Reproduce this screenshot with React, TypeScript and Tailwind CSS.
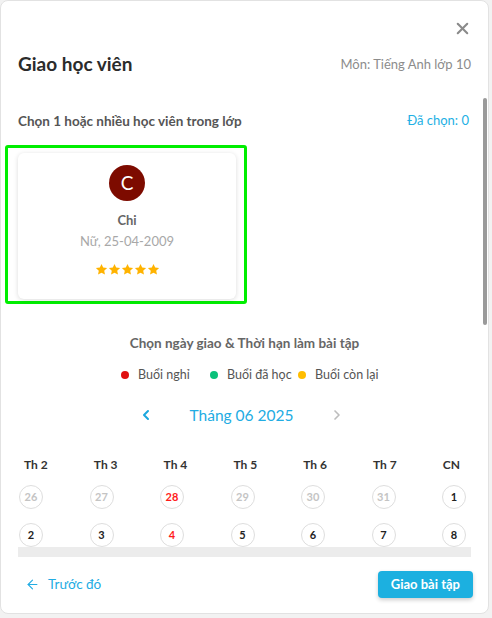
import React from 'react';
import { X, ChevronLeft, ChevronRight, ArrowLeft } from 'lucide-react';

const weekdays = ['Th 2', 'Th 3', 'Th 4', 'Th 5', 'Th 6', 'Th 7', 'CN'];

type Day = { d: number; tone: 'muted' | 'red' | 'dark' };

const rows: Day[][] = [
  [
    { d: 26, tone: 'muted' },
    { d: 27, tone: 'muted' },
    { d: 28, tone: 'red' },
    { d: 29, tone: 'muted' },
    { d: 30, tone: 'muted' },
    { d: 31, tone: 'muted' },
    { d: 1, tone: 'dark' },
  ],
  [
    { d: 2, tone: 'dark' },
    { d: 3, tone: 'dark' },
    { d: 4, tone: 'red' },
    { d: 5, tone: 'dark' },
    { d: 6, tone: 'dark' },
    { d: 7, tone: 'dark' },
    { d: 8, tone: 'dark' },
  ],
];

const toneClass = {
  muted: 'text-[#c4c4c4]',
  red: 'text-[#ff1a1a]',
  dark: 'text-[#222]',
};

const Star = () => (
  <svg viewBox="0 0 24 24" className="h-[13px] w-[13px]" fill="#ffb300">
    <path d="M12 1.8l3.1 6.6 7.2.9-5.3 5 1.4 7.1L12 17.9l-6.4 3.5 1.4-7.1-5.3-5 7.2-.9z" />
  </svg>
);

const legend = [
  { label: 'Buổi nghỉ', dot: 'bg-[#e01010]', w: 'w-[89px]' },
  { label: 'Buổi đã học', dot: 'bg-[#0ac17a]', w: 'w-[88px]' },
  { label: 'Buổi còn lại', dot: 'bg-[#ffbd00]', w: 'w-[76px]' },
];

export default function App() {
  return (
    <div className="w-[492px] h-[618px] bg-[#f2f2f2]" style={{ fontFamily: 'Lato, "Noto Sans", sans-serif' }}>
      <div className="relative w-[489px] h-[614px] bg-white rounded-lg border border-[#e2e2e2] overflow-hidden">
        {/* scrollbar thumb */}
        <div className="absolute right-[1px] top-[97px] w-[4px] h-[227px] rounded-full bg-[#9a9a9a]" />

        <div className="flex justify-end pt-[18px] pr-[16px]">
          <X className="h-[19px] w-[19px] text-[#8a8a8a]" strokeWidth={2.6} />
        </div>

        <div className="flex items-center justify-between px-[17px] mt-[12px]">
          <h2 className="text-[19px] font-bold text-[#2b2b2b]">Giao học viên</h2>
          <span className="text-[13px] text-[#8c8c8c]">Môn: Tiếng Anh lớp 10</span>
        </div>

        <div className="flex items-center justify-between pl-[17px] pr-[19px] mt-[32px]">
          <span className="text-[13.5px] font-bold text-[#555]">Chọn 1 hoặc nhiều học viên trong lớp</span>
          <span className="text-[13px] text-[#22b0e4]">Đã chọn: 0</span>
        </div>

        <div className="ml-[4px] mt-[14px] w-[242px] h-[159px] border-[3px] border-[#00ee00] rounded-[3px] pl-[10px] pt-[5px]">
          <div className="w-[218px] h-[146px] bg-white rounded-md shadow-[0_1px_5px_rgba(0,0,0,0.14)] flex flex-col items-center">
            <div className="mt-[12px] h-[36px] w-[36px] rounded-full bg-[#7d0b00] flex items-center justify-center text-white text-[19px]">
              C
            </div>
            <div className="mt-[10px] text-[13px] font-bold text-[#666]">Chi</div>
            <div className="mt-[2px] text-[13px] text-[#a8a8a8]">Nữ, 25-04-2009</div>
            <div className="mt-[11px] flex">
              <Star />
              <Star />
              <Star />
              <Star />
              <Star />
            </div>
          </div>
        </div>

        <div className="mt-[29px] text-center text-[13.5px] font-bold text-[#666]">
          Chọn ngày giao &amp; Thời hạn làm bài tập
        </div>

        <div className="mt-[13px] flex justify-center items-center text-[12.5px] text-[#555] pl-[6px] whitespace-nowrap">
          {legend.map((l) => (
            <div key={l.label} className={`flex items-center shrink-0 ${l.w}`}>
              <span className={`h-[8px] w-[8px] shrink-0 rounded-full mr-[9px] ${l.dot}`} />
              {l.label}
            </div>
          ))}
        </div>

        <div className="mt-[19px] flex items-center justify-center pr-[6px]">
          <ChevronLeft className="h-[16px] w-[16px] text-[#1aa7de]" strokeWidth={3} />
          <span className="mx-[36px] text-[15.5px] text-[#22ace3]">Tháng 06 2025</span>
          <ChevronRight className="h-[16px] w-[16px] text-[#bdbdbd]" strokeWidth={2.5} />
        </div>

        <div className="mt-[29px] flex justify-between pl-[23px] pr-[28px] text-[12px] font-bold text-[#333]">
          {weekdays.map((w) => (
            <span key={w}>{w}</span>
          ))}
        </div>

        <div className="mt-[11px] flex flex-col gap-[14px] pl-[18px] pr-[22px]">
          {rows.map((row, i) => (
            <div key={i} className="flex justify-between">
              {row.map((day) => (
                <div
                  key={day.d}
                  className={`h-[24px] w-[24px] rounded-full border border-[#dedede] flex items-center justify-center text-[11px] font-bold ${toneClass[day.tone]}`}
                >
                  {day.d}
                </div>
              ))}
            </div>
          ))}
        </div>
        <div className="mx-[17px] h-[10px] bg-[#ececec]" />

        <div className="mt-[14px] flex items-center justify-between pl-[24px] pr-[15px]">
          <div className="flex items-center gap-[8px] text-[13.5px] text-[#22ace3]">
            <ArrowLeft className="h-[15px] w-[15px]" strokeWidth={1.8} />
            Trước đó
          </div>
          <button className="h-[27px] px-[13px] rounded bg-[#1cb0e0] text-white text-[13px] font-bold shadow-[0_2px_4px_rgba(0,0,0,0.2)]">
            Giao bài tập
          </button>
        </div>
      </div>
    </div>
  );
}
